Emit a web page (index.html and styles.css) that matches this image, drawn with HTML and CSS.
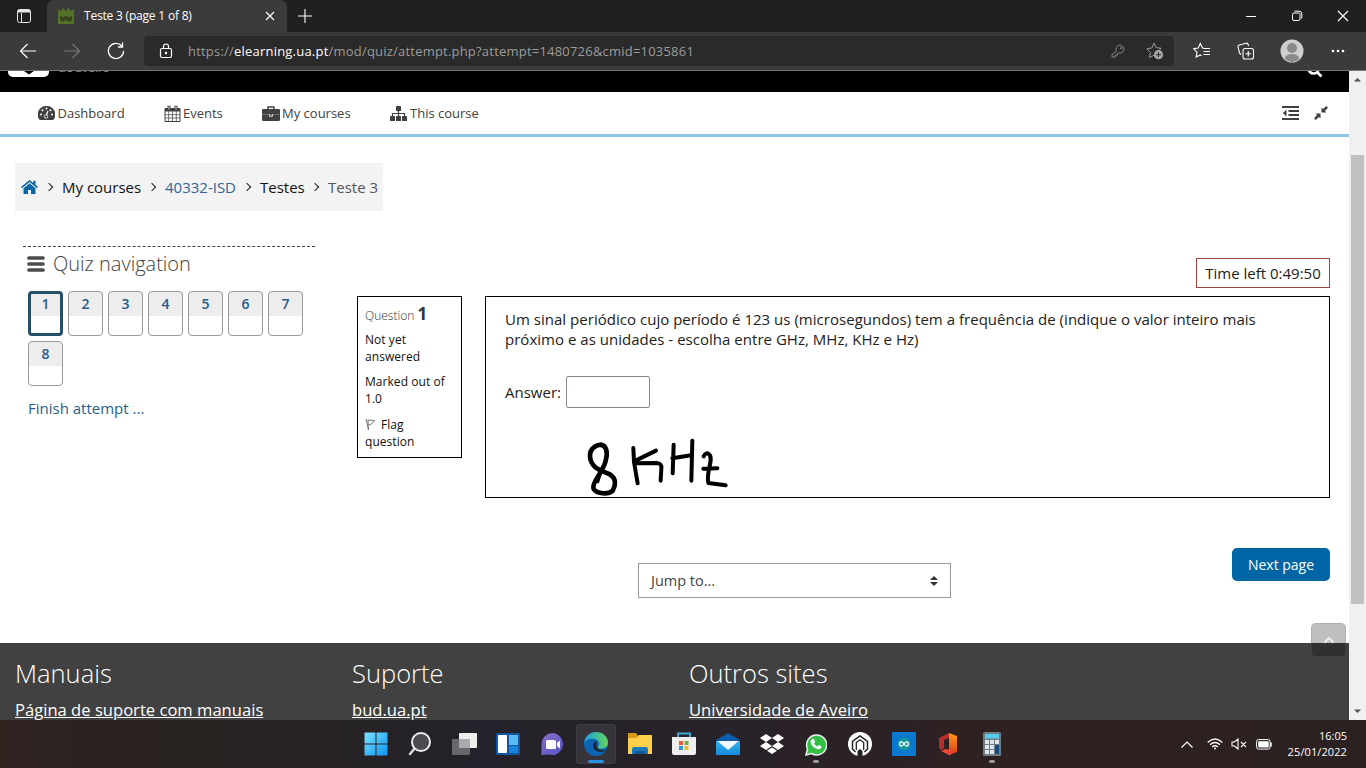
FILE: index.html
```html
<!DOCTYPE html>
<html lang="en">
<head>
<meta charset="utf-8">
<title>Teste 3 (page 1 of 8)</title>
<link rel="stylesheet" href="styles.css">
</head>
<body>
<div class="tabstrip">
  <svg class="tabs-icon" width="16" height="16" viewBox="0 0 16 16" fill="none" stroke="#e8e8e8"><rect x="1.5" y="1.500" width="13" height="13" rx="2"/><path d="M5.500 5v9"/><path d="M2 3.200h12" stroke-width="2.600"/></svg>
  <div class="tab">
    <svg width="16" height="16" viewBox="0 0 16 16"><path d="M0 1l3 2 2-3 3 3 2-3 3 3 3-2v15H0z" fill="#55722a"/><path d="M2 8l3 1 3-1 3 1 3-1v4l-2 2-4-2-4 2-2-2z" fill="#3a4520"/></svg>
    <span class="tab-title">Teste 3 (page 1 of 8)</span>
    <svg class="tab-close" width="10" height="10" viewBox="0 0 10 10" stroke="#fff" stroke-width="1.2"><path d="M1 1l8 8M9 1L1 9"/></svg>
  </div>
  <svg class="new-tab" width="14" height="14" viewBox="0 0 14 14" stroke="#fff" stroke-width="1.1"><path d="M7 0v14M0 7h14"/></svg>
  <div class="window-buttons">
    <svg width="12" height="12" viewBox="0 0 12 12" stroke="#fff"><path d="M1 6.5h10"/></svg>
    <svg width="12" height="12" viewBox="0 0 12 12" fill="none" stroke="#fff"><rect x="1.5" y="3" width="7.5" height="7.5" rx="1.5"/><path d="M3.5 1.2h4.5a2.8 2.8 0 0 1 2.8 2.8v4.5"/></svg>
    <svg width="12" height="12" viewBox="0 0 12 12" stroke="#fff" stroke-width="1.2"><path d="M1 1l10 10M11 1L1 11"/></svg>
  </div>
</div>
<div class="toolbar">
  <div class="nav-buttons">
    <svg width="18" height="18" viewBox="0 0 18 18" fill="none" stroke="#fff" stroke-width="1.2"><path d="M17 9H1.5M8.5 2L1.5 9l7 7"/></svg>
    <svg width="18" height="18" viewBox="0 0 18 18" fill="none" stroke="#777" stroke-width="1.2"><path d="M1 9h15.500M9.500 2l7 7-7 7"/></svg>
    <svg width="18" height="18" viewBox="0 0 18 18" fill="none" stroke="#fff" stroke-width="1.3"><path d="M14.800 4A7.600 7.600 0 1 0 16.600 9M15.500 .5v4.500H11"/></svg>
  </div>
  <div class="address">
    <svg width="14" height="16" viewBox="0 0 14 16" fill="none" stroke="#fff" stroke-width="1.2"><rect x="1.500" y="5.500" width="11" height="9" rx="1.500"/><path d="M4.500 5.500V3.500a2.500 2.500 0 0 1 5 0v2"/><circle cx="7" cy="10" r=".6" fill="#fff"/></svg>
    <span class="url">https://<b>elearning.ua.pt</b>/mod/quiz/attempt.php?attempt=1480726&amp;cmid=1035861</span>
    <svg class="key" width="16" height="16" viewBox="0 0 16 16" fill="none" stroke="#858585"><path d="M6.500 8.200A4 4 0 1 1 9 10L7.500 10.200V12H5.500v2H2v-2.500z"/><circle cx="11" cy="5" r=".8"/></svg>
    <svg width="18" height="18" viewBox="0 0 18 18"><path d="M8 1l2.200 4.600 5 .7-3.600 3.600M8 13.200L3.500 15.500l.9-5L.8 6.800l5-.8L8 1.200" fill="none" stroke="#9a9a9a"/><circle cx="12.500" cy="12.700" r="4.600" fill="#aaa"/><path d="M12.500 10v5.400M9.800 12.700h5.400" stroke="#2b2b2b"/></svg>
  </div>
  <div class="browser-actions">
    <svg width="18" height="18" viewBox="0 0 18 18" fill="none" stroke="#fff" stroke-width="1.100"><path d="M11 6.200l-1.500-.2L7.300 1.500 5.200 6l-4.500.7L4 10.200l-.8 4.900L7.300 13l1.200.7M10.500 6.500H17M10.500 9.500H17M10.500 12.500H17"/></svg>
    <svg width="18" height="18" viewBox="0 0 18 18" fill="none" stroke="#fff" stroke-width="1.100"><rect x="6" y="6.500" width="10.500" height="10.500" rx="2"/><path d="M11.250 9v5.500M8.500 11.750H14M4 12.500L2.500 11 1 5q-.3-1.700 1.300-2L9 1.200q1.500-.3 2 1l.6 1.800"/></svg>
    <svg width="24" height="24" viewBox="0 0 24 24"><circle cx="12" cy="12" r="11.500" fill="#d1cfcd"/><circle cx="12" cy="9" r="5" fill="#8d8b89"/><path d="M4.500 20q1-5 7.500-5t7.500 5q-7 6-15 0" fill="#8d8b89"/></svg>
    <svg width="14" height="4" viewBox="0 0 14 4" fill="#fff"><circle cx="2" cy="2" r="1.300"/><circle cx="7" cy="2" r="1.300"/><circle cx="12" cy="2" r="1.300"/></svg>
  </div>
</div>

<div class="viewport">
 <div class="page">
  <header class="brand">
    <div class="brand-logo"><svg width="12" height="4" viewBox="0 0 12 4"><path d="M1 0h10L6 3.500z"/></svg></div>
    <span class="brand-text">de aveiro</span>
    <svg class="search" width="16" height="16" viewBox="0 0 16 16" fill="none" stroke="#fff" stroke-width="2.600"><circle cx="6.500" cy="6.500" r="5"/><path d="M10 10l4.500 4.500"/></svg>
  </header>
  <nav class="main-nav">
    <a><svg width="17" height="14" viewBox="0 0 17 14"><path d="M8.500 0A8.500 8.500 0 0 0 1 13q.4 1 1.500 1h12q1 0 1.500-1A8.500 8.500 0 0 0 8.500 0" fill="#404040"/><g fill="#fff"><circle cx="3" cy="8.500" r="1"/><circle cx="4.500" cy="4.300" r="1"/><circle cx="8.500" cy="2.600" r="1"/><circle cx="12.500" cy="4.300" r="1"/><circle cx="14" cy="8.500" r="1"/></g><path d="M8 10l2-5" stroke="#fff" stroke-width="1.200"/><circle cx="8" cy="10.500" r="1.700" fill="#404040" stroke="#fff" stroke-width=".8"/></svg>Dashboard</a>
    <a><svg width="17" height="17" viewBox="0 0 17 17"><path d="M1 3.500h15v13H1z" fill="#fff" stroke="#404040"/><path d="M1 3.500h15v3H1z" fill="#404040"/><path d="M4.700 6v10M8.500 6v10M12.300 6v10M1 9.700h15M1 13h15" stroke="#505050" stroke-width=".8"/><path d="M5 .8v4M12 .8v4" stroke="#404040" stroke-width="3"/><path d="M5 1.500v3M12 1.500v3" stroke="#ddd"/></svg>Events</a>
    <a><svg width="18" height="15" viewBox="0 0 18 15"><path d="M6 3.500V1h6v2.500" fill="none" stroke="#404040" stroke-width="1.400"/><rect y="3" width="18" height="12" rx="1.300" fill="#404040"/><path d="M0 8.500h18" stroke="#999" stroke-width=".5"/><path d="M7.500 8.500v1.700h3V8.500" fill="none" stroke="#fff" stroke-width=".9"/></svg>My courses</a>
    <a><svg width="17" height="15" viewBox="0 0 17 15" fill="#404040"><rect x="6" width="5" height="5" rx=".5"/><rect y="10" width="5" height="5" rx=".5"/><rect x="6" y="10" width="5" height="5" rx=".5"/><rect x="12" y="10" width="5" height="5" rx=".5"/><path d="M2.500 10V7.500h12V10M8.500 4v6" fill="none" stroke="#404040" stroke-width="1.200"/></svg>This course</a>
    <div class="nav-tools">
      <svg width="17" height="14" viewBox="0 0 17 14"><path d="M0 1h17M6.500 5h10.500M6.500 9h10.500M0 13h17" stroke="#404040" stroke-width="2"/><path d="M4.500 3.500v7L.8 7z" fill="#404040"/></svg>
      <svg width="14" height="14" viewBox="0 0 14 14" fill="#404040"><path d="M7.500 1.500l1.600 1.600L12.200 0 14 1.800l-3.100 3.100 1.600 1.600h-5zM6.500 12.500l-1.600-1.600L1.800 14 0 12.200l3.100-3.100-1.600-1.600h5z"/></svg>
    </div>
  </nav>
  <nav class="breadcrumb">
    <svg width="17" height="14" viewBox="0 0 17 14" fill="#0c65a2"><path d="M8.500 0L0 7l1 1.200 7.500-6.200L16 8.200 17 7l-2.500-2.200V.8h-2.200v2.100z"/><path d="M2.500 8.200l6-5 6 5V14H10v-4H7v4H2.500z"/></svg>
    <i></i><a>My courses</a><i></i><a class="course">40332-ISD</a><i></i><a>Testes</a><i></i><span>Teste 3</span>
  </nav>
  <main class="columns">
    <aside class="quiz-nav">
      <h2><svg width="18" height="16" viewBox="0 0 18 16" stroke="#4c4c4c" stroke-width="3.700" stroke-linecap="round"><path d="M2 2h14M2 8h14M2 14h14"/></svg>Quiz navigation</h2>
      <div class="quiz-buttons">
        <a class="current">1</a><a>2</a><a>3</a><a>4</a><a>5</a><a>6</a><a>7</a><a>8</a>
      </div>
      <a class="finish">Finish attempt ...</a>
    </aside>
    <section class="attempt">
      <div class="timer">Time left 0:49:50</div>
      <div class="question">
        <div class="info">
          <h3>Question <b>1</b></h3>
          <p>Not yet<br>answered</p>
          <p>Marked out of<br>1.0</p>
          <p class="flag"><svg width="11" height="13" viewBox="0 0 11 13" fill="none" stroke="#777"><path d="M1 1l2.500 11L3 2l6.500.5-3 3.500-3 1"/></svg>Flag<br>question</p>
        </div>
        <div class="content">
          <p>Um sinal periódico cujo período é 123 us (microsegundos) tem a frequência de (indique o valor inteiro mais<br>próximo e as unidades - escolha entre GHz, MHz, KHz e Hz)</p>
          <div class="answer"><label>Answer:</label><input type="text"></div>
          <svg class="ink" width="200" height="90" viewBox="0 0 600 270" fill="none" stroke="#000" stroke-width="12" stroke-linecap="round" stroke-linejoin="round"><path stroke-width="14" d="M134 80C118 66 88 82 90 110 92 138 112 148 138 158 168 168 170 190 158 212 142 226 100 220 100 202 98 184 134 150 138 118 144 94 138 76 122 74"/><path stroke-width="8" d="M122 158l-8 28"/><path d="M220 84l2 42 11 64M222 124l66-32M224 130l66-1q16 1 14 16l-2 37"/><path d="M341 74l-3 86M337 115l56-9M397 62l-3 120"/><path d="M431 109q7-14 16-6c16 14-10 52-2 86l52 7M430 146l42-1"/></svg>
        </div>
      </div>
      <div class="pager">
        <div class="jump">Jump to...<svg width="8" height="10" viewBox="0 0 8 10" fill="#333"><path d="M4 0l4 4H0zM4 10L0 6h8z"/></svg></div>
        <a class="next">Next page</a>
      </div>
    </section>
  </main>
  <footer class="footer">
    <div><h4>Manuais</h4><a>Página de suporte com manuais</a></div>
    <div><h4>Suporte</h4><a>bud.ua.pt</a></div>
    <div><h4>Outros sites</h4><a>Universidade de Aveiro</a></div>
  </footer>
  <div class="to-top"><svg width="12" height="8" viewBox="0 0 12 8" fill="none" stroke="#eee" stroke-width="2"><path d="M1.500 6.500L6 2l4.500 4.500"/></svg></div>
 </div>
 <div class="scrollbar">
   <svg width="9" height="5" viewBox="0 0 9 5" fill="#505050"><path d="M1 4.500L4.500 1 8 4.500z"/></svg>
   <div class="thumb"></div>
   <svg width="9" height="5" viewBox="0 0 9 5" fill="#505050"><path d="M1 .5h7L4.500 4z"/></svg>
 </div>
</div>

<div class="taskbar">
  <svg width="0" height="0" class="defs"><defs>
    <linearGradient id="win" x2="1" y2="1"><stop stop-color="#7ae4ff"/><stop offset="1" stop-color="#0d91f0"/></linearGradient>
    <linearGradient id="chat" x2="1" y2="1"><stop stop-color="#8a6cc4"/><stop offset="1" stop-color="#5557c8"/></linearGradient>
    <linearGradient id="edge" x2="1" y2="0"><stop stop-color="#1c9cdf"/><stop offset="1" stop-color="#62d75c"/></linearGradient>
    <linearGradient id="mail" x2="0" y2="1"><stop stop-color="#30b4f2"/><stop offset="1" stop-color="#168ada"/></linearGradient>
    <linearGradient id="office" x2="0" y2="1"><stop stop-color="#ff9b18"/><stop offset="1" stop-color="#d83b1c"/></linearGradient>
  </defs></svg>
  <div class="apps">
    <div><svg width="24" height="24" viewBox="0 0 24 24"><path d="M.5.500h11v11H.5zM12.500.500h11v11h-11zM.5 12.500h11v11H.5zM12.500 12.500h11v11h-11z" fill="url(#win)"/></svg></div>
    <div><svg width="24" height="24" viewBox="0 0 24 24"><path d="M7 16l-5 6" stroke="#ddd" stroke-width="2.500" stroke-linecap="round"/><circle cx="13" cy="10" r="9" fill="#4c4b4f" stroke="#eee" stroke-width="2"/></svg></div>
    <div><svg width="26" height="24" viewBox="0 0 26 24"><rect x="8" y="1" width="18" height="15" rx="1" fill="#eee"/><rect x="1" y="7" width="18" height="16" rx="1" fill="#707073" opacity=".9"/><path d="M8 7h11v9H8z" fill="#aaa"/></svg></div>
    <div><svg width="24" height="22" viewBox="0 0 24 22"><rect width="24" height="22" rx="1.500" fill="#1255a0"/><rect x="2" y="2" width="9" height="18" rx="1" fill="#fff"/><path d="M13 2h9v10h-9z" fill="#58bdf3"/><path d="M13 13h9v7h-9z" fill="#1686dc"/></svg></div>
    <div><svg width="24" height="24" viewBox="0 0 24 24"><path d="M12 1a11 11 0 1 1-3 21.600L1.500 23V12A11 11 0 0 1 12 1" fill="url(#chat)"/><rect x="6" y="8" width="10" height="9" rx="1.500" fill="#fff"/><path d="M17 11l3-2.500v8L17 14z" fill="#fff"/></svg></div>
    <div class="active"><svg width="24" height="24" viewBox="0 0 24 24"><circle cx="12" cy="12" r="12" fill="#0c64b5"/><path d="M0 11C1 4 6 0 12 0c7 0 12 5 12 10.500 0 4-3 6-7 6q-3 0-3-2c1-1 1.500-2 1.300-3.500C14.500 8 11 6.500 7.500 6.800 4 7 1 9 0 11" fill="url(#edge)"/><path d="M24 17q-1 .5-2 .7-9 2-9.500-4-1-3 1-4.200Q9.500 9 9 13q0 6 7 7 4 0 7-2z" fill="#26232b"/></svg></div>
    <div><svg width="26" height="24" viewBox="0 0 26 24"><path d="M1 1h8l2 3h14v18H1z" fill="#d99a16"/><path d="M1 6h8l3-3h13v19H1z" fill="#fdd04b"/><path d="M5 22v-5q0-2 2-2h12q2 0 2 2v5z" fill="#1878bd"/><path d="M8 22v-3h10v3z" fill="#115893"/></svg></div>
    <div><svg width="26" height="24" viewBox="0 0 26 24"><path d="M7 7V1.500h12V7" fill="none" stroke="#37abd6" stroke-width="2"/><path d="M1 5h24v16q0 2-2 2H3q-2 0-2-2z" fill="#eee"/><path d="M8 9h4v4H8z" fill="#e35a35"/><path d="M13.500 9h4v4h-4z" fill="#78a943"/><path d="M8 14h4v4H8z" fill="#3297cc"/><path d="M13.500 14h4v4h-4z" fill="#edb928"/></svg></div>
    <div><svg width="24" height="24" viewBox="0 0 24 24"><path d="M0 8l12-7 12 7v5H0z" fill="#0d5ca9"/><path d="M0 9v14h24V9L12 17z" fill="url(#mail)"/><path d="M1 9h22l-11 9z" fill="#eef8fe"/></svg></div>
    <div><svg width="24" height="22" viewBox="0 0 24 22" fill="#fff"><path d="M6 1l6 4-6 4-6-4zM18 1l6 4-6 4-6-4zM6 9l6 4-6 4-6-4zM18 9l6 4-6 4-6-4zM12 14.500l5 3.200-5 3.300-5-3.300z"/></svg></div>
    <div class="running"><svg width="22" height="23" viewBox="0 0 22 23"><path d="M1 22l1.500-6A10 10 0 1 1 6.500 20.500z" fill="#31bf46" stroke="#eee" stroke-width="1.500"/><path d="M7 6l2 0 1 3-1 1.500q1 2 3.500 3l1.500-1.500 2.500 1.200q0 3.200-3.500 3Q6 14 5.500 8.500 5.700 7 7 6" fill="#fff"/></svg></div>
    <div><svg width="24" height="24" viewBox="0 0 24 24"><circle cx="12" cy="12" r="12" fill="#fff"/><path d="M7.500 20l-3-3V9.300L12 4l7.500 5.300V17l-3 3" fill="none" stroke="#222" stroke-width="1.500"/><path d="M8.300 18v-7.500L12 7.800l3.700 2.700V18" fill="none" stroke="#222" stroke-width="1.300"/><path d="M9.500 24v-5l2.500-2 2.500 2v5z" fill="#222"/></svg></div>
    <div><svg width="24" height="24" viewBox="0 0 24 24"><path d="M0 0h24v24H0z" fill="#0878d0"/><circle cx="12" cy="12" r="6.500" fill="#14949b"/><path d="M12 12c-2-3-4.500-2.500-4.500 0s2.500 3 4.500 0 4.500-2.500 4.500 0-2.500 3-4.500 0" fill="none" stroke="#fff" stroke-width="1.300"/></svg></div>
    <div><svg width="20" height="24" viewBox="0 0 20 24"><path d="M1 6l10-5v5L6 8v8l-3 2-2-2z" fill="#b72f2b"/><path d="M11 1l8 3v16l-8 3V1" fill="url(#office)"/><path d="M3 19l4-2 6 1v5h-2z" fill="#ed4636"/></svg></div>
    <div class="running"><svg width="18" height="24" viewBox="0 0 18 24"><rect width="18" height="24" rx="1.500" fill="#707c86"/><path d="M2 2h14v4.500H2z" fill="#55cbee"/><path d="M2 8h4v4H2zM7 8h4v4H7zM12 8h4v4h-4zM2 13h4v4H2zM7 13h4v4H7zM2 18h4v4H2zM7 18h4v4H7z" fill="#dfe5ea"/><path d="M12 13h4v9h-4z" fill="#154d83"/></svg></div>
  </div>
  <div class="tray">
    <svg width="12" height="7" viewBox="0 0 12 7" fill="none" stroke="#fff" stroke-width="1.200"><path d="M.5 6.500L6 1l5.500 5.500"/></svg>
    <svg width="16" height="12" viewBox="0 0 16 12" fill="none" stroke="#fff" stroke-width="1.200"><path d="M.7 4.500q7.300-7 14.600 0M3 6.800q5-4.600 10 0M5.200 9q2.800-2.500 5.600 0"/><circle cx="8" cy="10.500" r="1" fill="#fff" stroke="none"/></svg>
    <svg width="16" height="12" viewBox="0 0 16 12" fill="none" stroke="#fff" stroke-width="1.100"><path d="M1 4h2.500L7 1v10L3.500 8H1zM10 4l5 5M15 4l-5 5"/></svg>
    <svg width="17" height="11" viewBox="0 0 17 11"><rect x=".6" y=".6" width="13.500" height="9.500" rx="2" fill="none" stroke="#fff"/><rect x="2.200" y="2.200" width="10.500" height="6.300" rx=".8" fill="#fff"/><path d="M15 3.500v4" stroke="#fff" stroke-width="1.500"/></svg>
    <div class="clock"><span>16:05</span><span class="date">25/01/2022</span></div>
  </div>
</div>
</body>
</html>
```
FILE: styles.css
```css
* { box-sizing: border-box; }
body { margin: 0; width: 1366px; height: 768px; overflow: hidden; display: flex; flex-direction: column; font: 15px/20px "Open Sans", sans-serif; color: #222; background: #fff; }
svg { display: block; flex: none; }
h2, h3, h4, p { margin: 0; font-weight: 400; }
a, span, label { white-space: nowrap; }

.tabstrip { height: 32px; flex: none; background: #202020; display: flex; align-items: center; }
.tabs-icon { margin: 0 15px 0 16px; }
.tab { width: 240px; height: 32px; background: #3b3b3b; border-radius: 7px 7px 0 0; display: flex; align-items: center; padding: 0 12px 0 11px; }
.tab-title { font: 12px "Open Sans", sans-serif; letter-spacing: -.2px; color: #fff; margin: -1px 0 0 10px; }
.tab-close { margin-left: auto; }
.new-tab { margin-left: 11px; }
.window-buttons { margin-left: auto; display: flex; gap: 34px; padding-right: 17px; }

.toolbar { height: 39px; flex: none; background: #3b3b3b; border-bottom: 1px solid #747474; display: flex; align-items: center; }
.nav-buttons { display: flex; gap: 26px; width: 144px; padding-left: 19px; }
.address { width: 1030px; height: 30px; background: #2a2a2a; border-radius: 4px; display: flex; align-items: center; padding: 0 10px 0 15px; }
.url { margin-left: 15px; color: #9c9c9c; font-size: 13px; letter-spacing: .21px; }
.url b { color: #fff; font-weight: 400; }
.key { margin-left: auto; margin-right: 20px; }
.browser-actions { flex: 1; display: flex; align-items: center; padding-left: 19px; }
.browser-actions svg:nth-child(2) { margin-left: 26px; }
.browser-actions svg:nth-child(3) { margin-left: 25px; }
.browser-actions svg:nth-child(4) { margin-left: 27px; }

.viewport { height: 649px; flex: none; display: flex; }
.page { position: relative; width: 1349px; height: 649px; overflow: hidden; display: flex; flex-direction: column; }
.brand { height: 21px; flex: none; background: #000; display: flex; overflow: hidden; padding-left: 8px; }
.brand-logo { width: 41px; height: 6px; background: #fff; border-radius: 0 0 5px 5px; display: flex; justify-content: center; }
.brand-text { color: #888; font-size: 13px; line-height: 20px; margin: -14px 0 0 9px; letter-spacing: -.5px; }
.search { margin: -9px 26px 0 auto; }
.main-nav { height: 45px; flex: none; border-bottom: 3px solid #8ec4e6; padding-left: 38px; display: grid; grid-template-columns: 126px 98px 128px 1fr auto; align-items: center; font-size: 13px; color: #404040; }
.main-nav a { display: flex; align-items: center; gap: 2.500px; }
.main-nav a:nth-child(n+2) { gap: 2px; }
.main-nav a:nth-child(4) { gap: 3px; }
.nav-tools { display: flex; gap: 15px; padding-right: 21px; }

.breadcrumb { width: 368px; height: 48px; flex: none; margin: 26px 0 0 15px; padding: 0 0 0 6px; background: #f3f3f3; display: grid; grid-template-columns: 25px 16px 87px 16px 79px 16px 52px 16px auto; align-items: center; color: #111; }
.breadcrumb a, .breadcrumb span { margin-top: -1px; }
.breadcrumb i { width: 6px; height: 6px; border: solid #222; border-width: 1.200px 1.200px 0 0; transform: rotate(45deg); }
.breadcrumb .course { color: #326496; }
.breadcrumb span { color: #555; }

.columns { height: 432px; flex: none; display: flex; }
.quiz-nav { width: 292px; height: 200px; margin: 35px 42px 0 23px; padding-left: 5px; border-top: 1px dashed #444; }
.quiz-nav h2 { display: flex; align-items: center; gap: 8px; margin: 4px 0 15px -1px; height: 25px; font-size: 20px; font-weight: 300; color: #444; }
.quiz-buttons { display: grid; grid-template-columns: repeat(7, 35px); gap: 5px; }
.quiz-buttons a { height: 45px; border: 1px solid #999; border-radius: 4px; background: linear-gradient(#ededed 24px, #fff 24px); color: #275b8e; font-size: 14px; font-weight: 600; text-align: center; line-height: 23px; }
.quiz-buttons .current { border: 3px solid #264f68; background: linear-gradient(#ededed 22px, #fff 22px); line-height: 19px; }
.finish { display: block; margin-top: 12px; color: #275f8c; }

.attempt { width: 973px; padding-top: 47px; display: flex; flex-direction: column; }
.timer { align-self: flex-end; width: 134px; height: 30px; border: 1px solid #a0483e; text-align: center; line-height: 28px; }
.question { display: flex; align-items: flex-start; gap: 23px; margin-top: 8px; }
.info { width: 105px; height: 162px; border: 1px solid #000; padding: 7px 7px 0; font-size: 12px; line-height: 17px; color: #111; }
.info h3 { font-size: 12px; line-height: 20px; font-weight: 300; height: 27px; color: #333; }
.info h3 b { font-size: 17px; font-weight: 700; }
.info p { margin-bottom: 8px; letter-spacing: .05px; }
.info .flag { margin-top: 9px; }
.flag svg { display: inline-block; vertical-align: -2px; margin-right: 5px; }
.content { position: relative; width: 845px; height: 202px; border: 1px solid #000; padding: 13px 19px; }
.content p { white-space: nowrap; margin-top: -1px; letter-spacing: .025px; }
.answer { display: flex; align-items: center; gap: 5px; margin-top: 27px; }
.answer input { width: 84px; height: 32px; border: 1px solid #8a8a8a; border-radius: 2px; padding: 0; background: #fff; }
.ink { position: absolute; left: 74px; top: 123px; }
.pager { display: flex; margin-top: 50px; padding-left: 281px; }
.jump { width: 313px; height: 35px; margin-top: 15px; border: 1px solid #999; display: flex; align-items: center; justify-content: space-between; padding: 0 12px; color: #444; font-size: 14.500px; }
.next { margin-left: auto; width: 98px; height: 33px; border-radius: 5px; background: #0065a4; color: #fff; font-size: 14px; text-align: center; line-height: 33px; }

.footer { height: 77px; flex: none; background: #414141; color: #fff; display: grid; grid-template-columns: 337px 337px 1fr; padding: 15px 15px 0; }
.footer h4 { font-size: 25.500px; line-height: 30px; font-weight: 300; }
.footer a { display: inline-block; margin-top: 10px; font-size: 16.600px; line-height: 24px; text-decoration: underline; }
.to-top { position: absolute; left: 1311px; top: 552px; width: 35px; height: 34px; border-radius: 5px; border: 1px solid rgba(110,110,110,.2); background: rgba(0,0,0,.25); display: flex; align-items: center; justify-content: center; }
.scrollbar { width: 17px; background: #f0f0f0; display: flex; flex-direction: column; align-items: center; justify-content: space-between; padding: 6px 0; }
.thumb { width: 13px; height: 449px; margin-bottom: 32px; background: #c0c0c0; }

.taskbar { height: 48px; flex: none; position: relative; display: flex; background: linear-gradient(90deg, #2f2320 0, #282321 15%, #24222a 35%, #28222a 52%, #2f2120 75%, #2b2121 100%); }
.defs { position: absolute; }
.apps { margin-left: 353.600px; display: flex; }
.apps div { width: 44.020px; height: 48px; display: flex; align-items: center; justify-content: center; position: relative; }
.apps .active::before { content: ""; position: absolute; inset: 4px 2px; background: rgba(255,255,255,.08); border-radius: 4px; border: 1px solid rgba(255,255,255,.06); }
.apps .active svg { position: relative; }
.apps .active::after { content: ""; position: absolute; bottom: 5px; width: 16px; height: 3px; border-radius: 2px; background: #2891df; }
.running::after { content: ""; position: absolute; bottom: 5px; width: 6px; height: 3px; border-radius: 2px; background: #999; }
.tray { margin-left: auto; display: flex; align-items: center; padding-right: 19px; }
.tray svg:nth-child(2) { margin-left: 14px; }
.tray svg:nth-child(3) { margin-left: 8px; }
.tray svg:nth-child(4) { margin-left: 9px; }
.clock { width: 66px; margin-left: 8px; display: flex; flex-direction: column; align-items: flex-end; color: #fff; font: 11px/16px "Open Sans", sans-serif; }
.date { letter-spacing: .1px; }
```
